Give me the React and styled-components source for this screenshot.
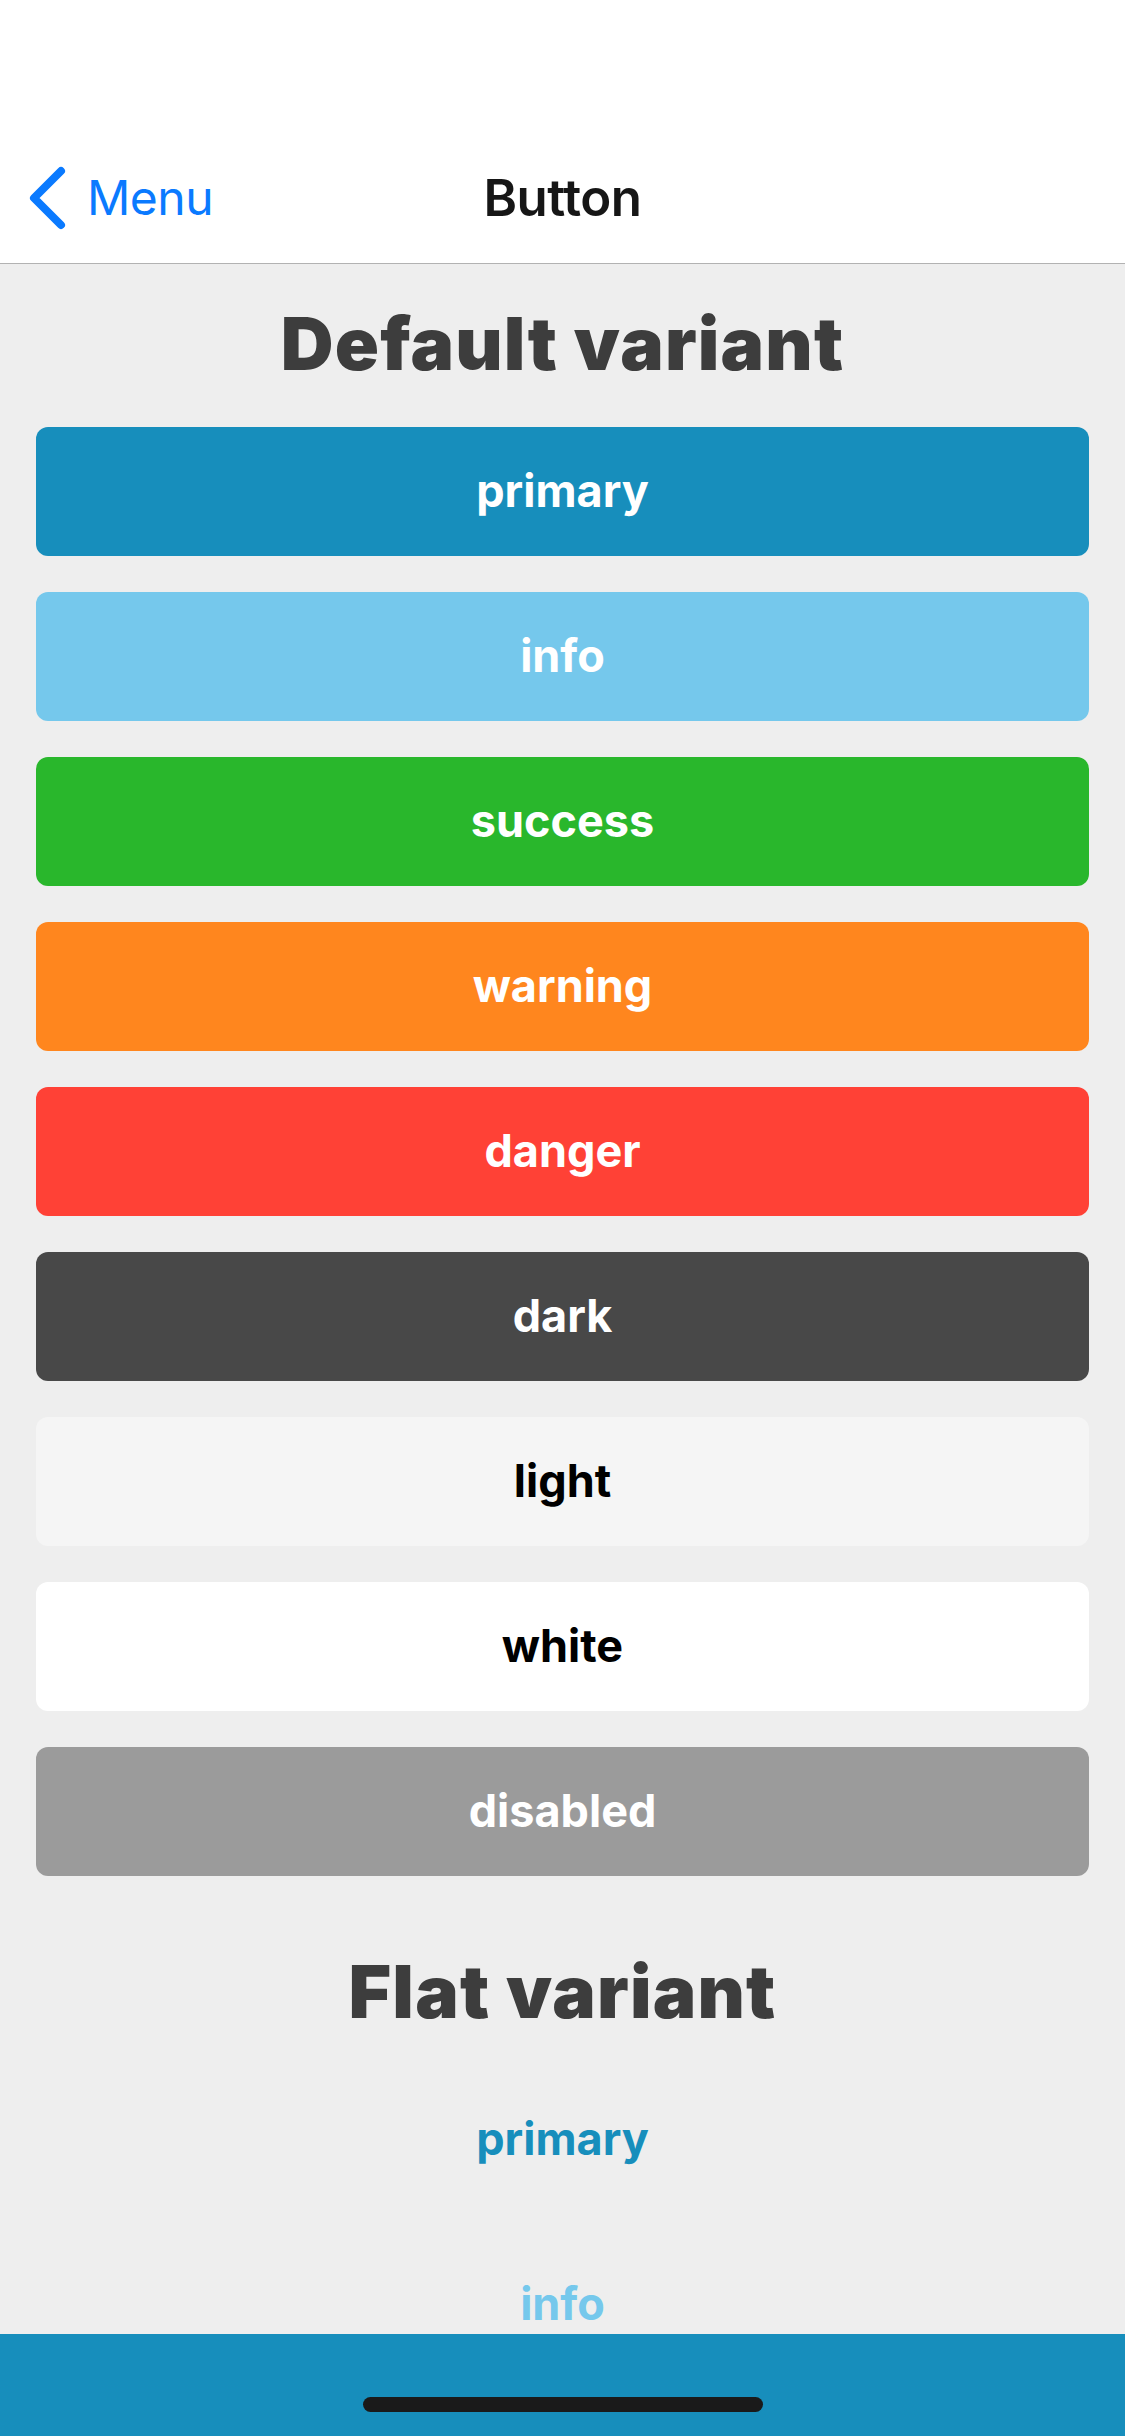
import React from "react";
import styled, { createGlobalStyle } from "styled-components";

const GlobalStyle = createGlobalStyle`
  html, body {
    margin: 0;
    padding: 0;
    background: #eeeeee;
    font-family: "Inter", "Noto Sans", sans-serif;
  }
  * { box-sizing: border-box; }
`;

const colors = {
  primary: "#178ebc",
  info: "#75c8ec",
  success: "#29b72c",
  warning: "#ff861e",
  danger: "#ff4136",
  dark: "#484848",
  light: "#f5f5f5",
  white: "#ffffff",
  disabled: "#9b9b9b",
};

const darkText = ["light", "white"];

const Screen = styled.div`
  height: 100vh;
  display: flex;
  flex-direction: column;
  background: #eeeeee;
  overflow: hidden;
`;

const Header = styled.header`
  flex: none;
  background: #fff;
  padding-top: 132px;
  border-bottom: 1px solid #b2b2b2;
`;

const NavBar = styled.nav`
  height: 131px;
  display: grid;
  grid-template-columns: 1fr auto 1fr;
  align-items: center;
  padding: 0 28px;
`;

const BackLink = styled.a`
  display: flex;
  align-items: center;
  gap: 21px;
  color: #0a7aff;
  font-size: 48px;
  font-weight: 400;
  text-decoration: none;
  letter-spacing: -0.5px;

  svg {
    width: 38px;
    height: 64px;
  }
`;

const NavTitle = styled.h1`
  margin: 0;
  font-size: 51px;
  font-weight: 600;
  color: #161616;
  letter-spacing: -0.5px;
`;

const Content = styled.main`
  flex: 1;
  overflow: hidden;
`;

const Section = styled.section`
  padding: 35px 36px 36px;
  display: flex;
  flex-direction: column;
  gap: 36px;
`;

const SectionTitle = styled.h2`
  margin: 0 0 2px;
  height: 90px;
  line-height: 90px;
  text-align: center;
  font-size: 73px;
  font-weight: 900;
  color: #3d3d3d;
  letter-spacing: 1.2px;
`;

const Button = styled.button`
  height: 129px;
  width: 100%;
  border: none;
  border-radius: 12px;
  background: ${(p) => (p.$flat ? "transparent" : colors[p.$variant])};
  color: ${(p) =>
    p.$flat
      ? colors[p.$variant]
      : darkText.includes(p.$variant)
      ? "#000"
      : "#fff"};
  font-family: "Inter", sans-serif;
  font-size: 45px;
  font-weight: 700;
  display: flex;
  align-items: center;
  justify-content: center;
  padding: 0 0 2px;
`;

const BottomBar = styled.footer`
  flex: none;
  height: 102px;
  background: #178ebc;
  display: flex;
  justify-content: center;
  align-items: flex-end;
  padding-bottom: 24px;
`;

const HomeIndicator = styled.div`
  width: 400px;
  height: 15px;
  border-radius: 8px;
  background: #1a1a1a;
`;

const ChevronLeft = () => (
  <svg viewBox="0 0 38 64" fill="none">
    <path
      d="M33 5 L6 32 L33 59"
      stroke="currentColor"
      strokeWidth="8"
      strokeLinecap="round"
      strokeLinejoin="round"
    />
  </svg>
);

const defaultVariants = [
  "primary",
  "info",
  "success",
  "warning",
  "danger",
  "dark",
  "light",
  "white",
  "disabled",
];

// only the first two flat buttons are in view above the bottom bar
const flatVariants = ["primary", "info"];

export default function App() {
  return (
    <Screen>
      <GlobalStyle />
      <Header>
        <NavBar>
          <BackLink href="#">
            <ChevronLeft />
            Menu
          </BackLink>
          <NavTitle>Button</NavTitle>
          <span />
        </NavBar>
      </Header>
      <Content>
        <Section>
          <SectionTitle>Default variant</SectionTitle>
          {defaultVariants.map((v) => (
            <Button key={v} $variant={v}>
              {v}
            </Button>
          ))}
        </Section>
        <Section>
          <SectionTitle>Flat variant</SectionTitle>
          {flatVariants.map((v) => (
            <Button key={v} $variant={v} $flat>
              {v}
            </Button>
          ))}
        </Section>
      </Content>
      <BottomBar>
        <HomeIndicator />
      </BottomBar>
    </Screen>
  );
}
